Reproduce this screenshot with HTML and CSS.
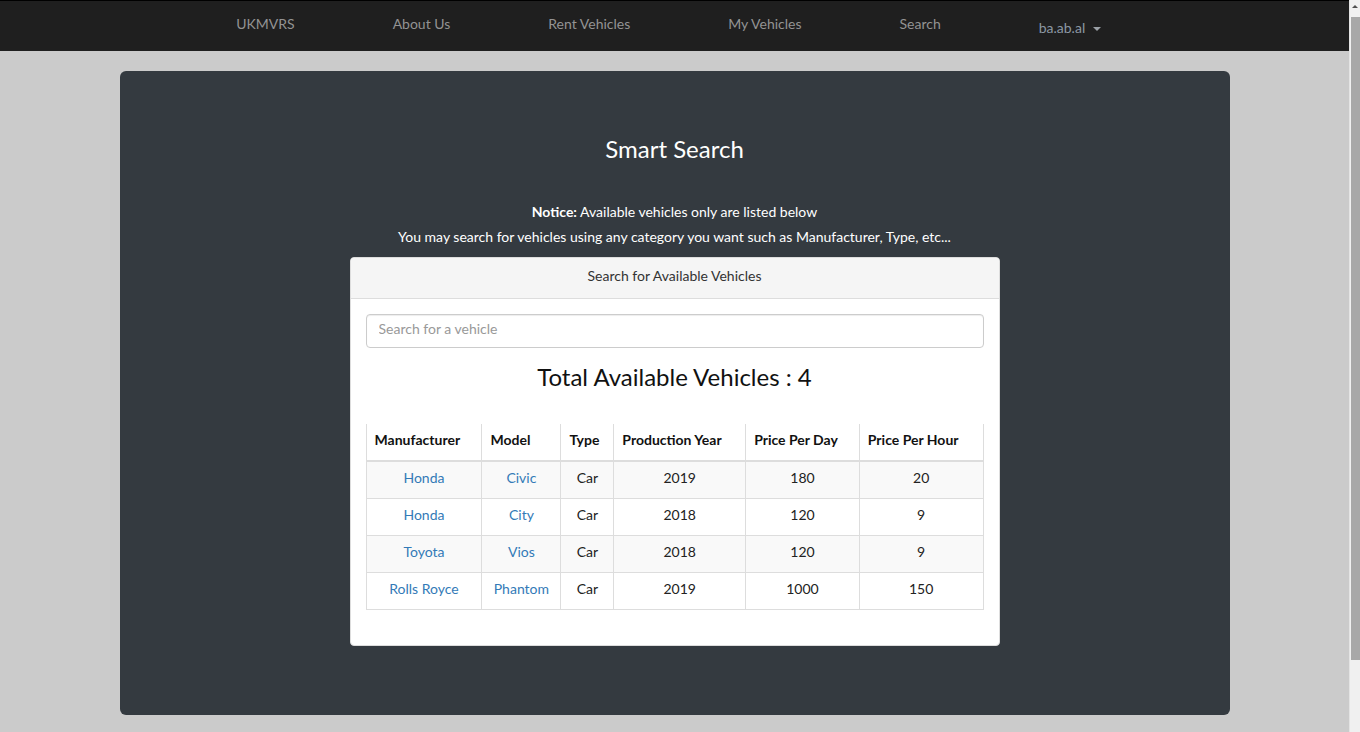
FILE: index.html
```html
<!DOCTYPE html>
<html lang="en">
<head>
<meta charset="utf-8">
<title>Smart Search - UKMVRS</title>
<link rel="stylesheet" href="styles.css">
</head>
<body>
<div class="viewport">
  <nav class="navbar">
    <ul class="nav">
      <li class="nav-item"><a href="#">UKMVRS</a></li>
      <li class="nav-item"><a href="#">About Us</a></li>
      <li class="nav-item"><a href="#">Rent Vehicles</a></li>
      <li class="nav-item"><a href="#">My Vehicles</a></li>
      <li class="nav-item"><a href="#">Search</a></li>
      <li class="nav-item dropdown"><a href="#">ba.ab.al <span class="caret"></span></a></li>
    </ul>
  </nav>
  <main class="page">
    <section class="jumbotron">
      <h2 class="title">Smart Search</h2>
      <p class="notice"><b>Notice:</b> Available vehicles only are listed below</p>
      <p class="notice">You may search for vehicles using any category you want such as Manufacturer, Type, etc...</p>
      <div class="card">
        <div class="card-header">Search for Available Vehicles</div>
        <div class="card-body">
          <input class="search" type="text" placeholder="Search for a vehicle">
          <h3 class="total">Total Available Vehicles : 4</h3>
          <table class="vehicles">
            <thead>
              <tr>
                <th class="c-man">Manufacturer</th>
                <th class="c-mod">Model</th>
                <th class="c-type">Type</th>
                <th class="c-year">Production Year</th>
                <th class="c-day">Price Per Day</th>
                <th class="c-hour">Price Per Hour</th>
              </tr>
            </thead>
            <tbody>
              <tr><td><a href="#">Honda</a></td><td><a href="#">Civic</a></td><td>Car</td><td>2019</td><td>180</td><td>20</td></tr>
              <tr><td><a href="#">Honda</a></td><td><a href="#">City</a></td><td>Car</td><td>2018</td><td>120</td><td>9</td></tr>
              <tr><td><a href="#">Toyota</a></td><td><a href="#">Vios</a></td><td>Car</td><td>2018</td><td>120</td><td>9</td></tr>
              <tr><td><a href="#">Rolls Royce</a></td><td><a href="#">Phantom</a></td><td>Car</td><td>2019</td><td>1000</td><td>150</td></tr>
            </tbody>
          </table>
        </div>
      </div>
    </section>
  </main>
</div>
<div class="scrollbar" aria-hidden="true"><span class="scroll-arrow"></span><span class="scroll-thumb"></span></div>
</body>
</html>
```
FILE: styles.css
```css
* { box-sizing: border-box; }

body {
  margin: 0;
  background: #cbcbcb;
  font-family: Lato, "Open Sans", sans-serif;
  font-size: 14px;
  line-height: 20px;
  color: #333;
}

a { text-decoration: none; color: #337ab7; }

.viewport {
  margin-right: 11px;
}

/* decorative browser scrollbar seen in the screenshot */
.scrollbar {
  position: fixed;
  top: 0;
  right: 0;
  width: 11px;
  height: 100vh;
  background: #f0f0f0;
  border-left: 1px solid #e4e4e4;
}

.scroll-arrow {
  position: absolute;
  top: 5px;
  left: 2px;
  width: 0;
  height: 0;
  border-bottom: 3px solid #505050;
  border-left: 3px solid transparent;
  border-right: 3px solid transparent;
}

.scroll-thumb {
  position: absolute;
  top: 17px;
  left: 1px;
  right: 0;
  height: 643px;
  background: #a8a8a8;
}

.navbar {
  height: 51px;
  background: #1f1f1f;
  border-top: 1px solid #000;
}

.nav {
  list-style: none;
  margin: 0;
  padding: 0;
  display: flex;
  justify-content: center;
}

.nav-item a {
  display: block;
  padding: 13px 49px;
  color: #939393;
  font-size: 14px;
}

.dropdown a {
  padding: 17px 61px 13px 49px;
  color: #8c98a4;
}

.caret {
  display: inline-block;
  width: 0;
  height: 0;
  margin-left: 4px;
  vertical-align: middle;
  border-top: 4px solid #9aa0a6;
  border-left: 4px solid transparent;
  border-right: 4px solid transparent;
}

.page {
  padding: 20px 0 82px;
}

.jumbotron {
  width: 1110px;
  margin: 0 auto;
  background: #343a40;
  border-radius: 6px;
  padding: 63px 15px 69px;
  color: #fff;
  text-align: center;
}

.title {
  margin: 0 0 37px;
  font-size: 24px;
  line-height: 29px;
  font-weight: normal;
}

.notice {
  margin: 0;
  line-height: 25px;
}

.notice:first-of-type { margin-top: -1px; }

.card {
  width: 650px;
  margin: 8px auto 0;
  background: #fff;
  border: 1px solid #ddd;
  border-radius: 4px;
  color: #333;
  text-align: center;
}

.card-header {
  background: #f5f5f5;
  border-bottom: 1px solid #ddd;
  padding: 8px 15px 12px;
  border-radius: 3px 3px 0 0;
}

.card-body {
  padding: 15px;
}

.search {
  display: block;
  width: 100%;
  height: 34px;
  padding: 3px 12px 9px;
  border: 1px solid #ccc;
  border-radius: 4px;
  font: inherit;
  color: #555;
  box-shadow: inset 0 1px 1px rgba(0,0,0,.075);
}

.search::placeholder { color: #999; }

.total {
  margin: 16px 0 34px;
  font-size: 24px;
  line-height: 26px;
  font-weight: normal;
  color: #111;
}

.vehicles {
  width: 100%;
  border-collapse: collapse;
  margin-bottom: 20px;
  border: 1px solid #ddd;
  border-top: 0;
}

.vehicles th,
.vehicles td {
  padding: 6px 8px 10px;
  border: 1px solid #ddd;
  line-height: 20px;
}

.vehicles th {
  text-align: left;
  border-top: 0;
  border-bottom: 2px solid #ddd;
  color: #111;
  font-weight: bold;
}

.vehicles td { text-align: center; color: #222; }

.vehicles tbody tr:nth-child(odd) { background: #f9f9f9; }

.c-man { width: 116px; }
.c-mod { width: 79px; }
.c-type { width: 53px; }
.c-year { width: 132px; }
.c-day { width: 114px; }
.c-hour { width: 124px; }
```
